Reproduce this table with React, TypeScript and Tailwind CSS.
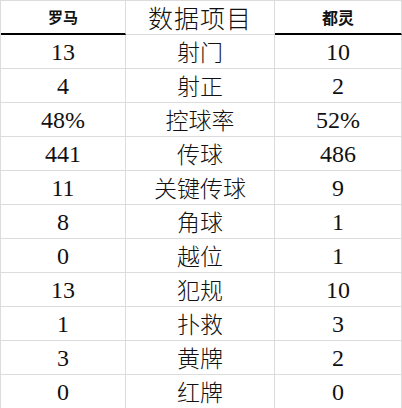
const rows: [string, string, string][] = [
  ['13', '射门', '10'],
  ['4', '射正', '2'],
  ['48%', '控球率', '52%'],
  ['441', '传球', '486'],
  ['11', '关键传球', '9'],
  ['8', '角球', '1'],
  ['0', '越位', '1'],
  ['13', '犯规', '10'],
  ['1', '扑救', '3'],
  ['3', '黄牌', '2'],
  ['0', '红牌', '0'],
];

function NumCell({ children }: { children: string }) {
  return (
    <div className="h-[34px] flex items-center justify-center border-r border-b border-[#dcdcdc] font-['Liberation_Serif','Times_New_Roman',serif] text-[24px] leading-none">
      {children}
    </div>
  );
}

function LabelCell({ children }: { children: string }) {
  return (
    <div className="h-[34px] flex items-center justify-center border-r border-b border-[#dcdcdc] font-['Noto_Sans_CJK_SC',sans-serif] font-light text-[23px] leading-none">
      {children}
    </div>
  );
}

export default function App() {
  return (
    <div className="w-[402px] h-[408px] bg-white text-[#111] overflow-hidden">
      <div className="grid grid-cols-[125px_149px_1fr] border-t border-l border-[#dcdcdc]">
        {/* Header */}
        <div className="h-[34px] flex items-center justify-center border-r border-[#dcdcdc] border-b-2 border-b-black font-['Noto_Sans_CJK_SC',sans-serif] text-[15px] font-bold">
          罗马
        </div>
        <div className="h-[34px] flex items-center justify-center border-r border-b border-[#dcdcdc] font-['Noto_Sans_CJK_SC',sans-serif] font-light text-[25px] tracking-[1px] leading-none">
          数据项目
        </div>
        <div className="h-[34px] flex items-center justify-center border-r border-[#dcdcdc] border-b-2 border-b-black font-['Noto_Sans_CJK_SC',sans-serif] text-[16px] font-bold">
          都灵
        </div>

        {rows.map(([home, label, away], i) => (
          <div key={i} className="contents">
            <NumCell>{home}</NumCell>
            <LabelCell>{label}</LabelCell>
            <NumCell>{away}</NumCell>
          </div>
        ))}
      </div>
    </div>
  );
}
